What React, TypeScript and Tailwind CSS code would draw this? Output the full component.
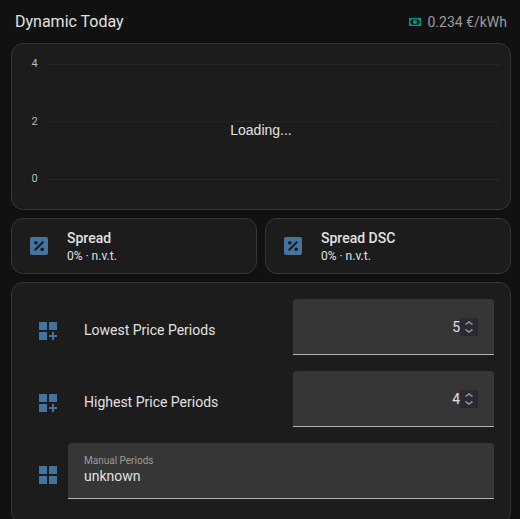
import { useId, useState } from "react";

const ICONS = {
  cash: "M3,6H21V18H3V6M12,9A3,3 0 0,1 15,12A3,3 0 0,1 12,15A3,3 0 0,1 9,12A3,3 0 0,1 12,9M7,8A2,2 0 0,1 5,10V14A2,2 0 0,1 7,16H17A2,2 0 0,1 19,14V10A2,2 0 0,1 17,8H7Z",
  percentBox:
    "M19 3H5C3.89 3 3 3.89 3 5V19C3 20.11 3.9 21 5 21H19C20.11 21 21 20.11 21 19V5C21 3.89 20.1 3 19 3M8.83 7.05C9.81 7.05 10.6 7.84 10.6 8.82C10.6 9.8 9.81 10.59 8.83 10.59C7.84 10.59 7.05 9.8 7.05 8.82C7.05 7.84 7.84 7.05 8.83 7.05M15.22 17C14.24 17 13.45 16.2 13.45 15.22C13.45 14.24 14.24 13.45 15.22 13.45C16.2 13.45 17 14.24 17 15.22C17 16.2 16.2 17 15.22 17M8.5 17.03L7 15.53L15.53 7L17.03 8.5L8.5 17.03Z",
  gridPlus:
    "M3 21H11V13H3M3 11H11V3H3M13 21M13 3V11H21V3M18 16V13H16V16H13V18H16V21H18V18H21V16H18Z",
  grid: "M3 11H11V3H3M3 21H11V13H3M13 21H21V13H13M13 3V11H21V3",
};

function Icon({ path, className }: { path: string; className: string }) {
  return (
    <svg viewBox="0 0 24 24" fill="currentColor" className={`shrink-0 ${className}`} aria-hidden="true">
      <path d={path} />
    </svg>
  );
}

const CARD = "rounded-xl border border-[#363636] bg-[#1c1c1c]";
const FIELD = "h-14 rounded-t border-b border-[#b4b4b4] bg-[#363636]";

function ChartCard() {
  return (
    <section className={`relative flex h-[167px] flex-col justify-between pt-3 pr-2.5 pb-[22px] pl-[17px] ${CARD}`}>
      {["4", "2", "0"].map((tick) => (
        <div key={tick} className="flex h-4 items-center gap-2">
          <span className="w-[11px] text-center text-[11px] leading-4 text-[#b8b8b8]">{tick}</span>
          <span className="h-px flex-1 bg-[#262626]" />
        </div>
      ))}
      <p className="absolute inset-x-0 top-[76px] text-center font-['Liberation_Sans',Arial,sans-serif] text-sm text-[#e1e1e1]">
        Loading...
      </p>
    </section>
  );
}

function SpreadCard({ title, value }: { title: string; value: string }) {
  return (
    <section className={`flex h-14 items-center gap-4 pl-[15px] ${CARD}`}>
      <Icon path={ICONS.percentBox} className="size-6 text-[#44739e]" />
      <div>
        <h2 className="text-sm leading-5 font-medium">{title}</h2>
        <p className="text-xs leading-4">{value}</p>
      </div>
    </section>
  );
}

function NumberRow({ label, initial }: { label: string; initial: number }) {
  const id = useId();
  const [value, setValue] = useState(initial);
  return (
    <div className="flex items-center">
      <div className="flex flex-1 items-center gap-6 pt-2">
        <Icon path={ICONS.gridPlus} className="size-6 text-[#44739e]" />
        <label htmlFor={id} className="flex-1 pb-0.5 text-sm">
          {label}
        </label>
      </div>
      <div className={`flex w-[201px] items-center px-4 ${FIELD}`}>
        <input
          id={id}
          type="number"
          value={value}
          onChange={(e) => setValue(Number(e.target.value))}
          className="min-w-0 flex-1 appearance-none bg-transparent text-right text-sm outline-none [-moz-appearance:textfield] [&::-webkit-inner-spin-button]:appearance-none"
        />
        <div className="flex size-[18px] flex-col items-center justify-center gap-1 bg-[#2b2a33] text-[#8f8f9d]">
          <button type="button" aria-label={`Increase ${label}`} onClick={() => setValue(value + 1)}>
            <svg viewBox="0 0 8 4" className="block h-1 w-2" fill="none" stroke="currentColor" strokeWidth="1.5">
              <path d="M0.5 3.6 4 0.8 7.5 3.6" />
            </svg>
          </button>
          <button type="button" aria-label={`Decrease ${label}`} onClick={() => setValue(value - 1)}>
            <svg viewBox="0 0 8 4" className="block h-1 w-2" fill="none" stroke="currentColor" strokeWidth="1.5">
              <path d="M0.5 0.4 4 3.2 7.5 0.4" />
            </svg>
          </button>
        </div>
      </div>
    </div>
  );
}

export default function App() {
  return (
    <main className="flex h-screen flex-col overflow-hidden bg-[#111111] pr-[9px] pl-[11px] font-[Roboto,sans-serif] text-[#e1e1e1]">
      <div className="flex shrink-0 flex-col gap-2">
        <header className="flex h-[35px] items-center justify-between px-1 pt-2">
          <h1 className="text-base">Dynamic Today</h1>
          <p className="flex items-center gap-1 text-sm text-[#9b9b9b]">
            <Icon path={ICONS.cash} className="size-4 text-[#009b82]" />
            0.234 €/kWh
          </p>
        </header>
        <ChartCard />
        <div className="grid grid-cols-2 gap-2">
          <SpreadCard title="Spread" value="0% · n.v.t." />
          <SpreadCard title="Spread DSC" value="0% · n.v.t." />
        </div>
        <section className={`flex flex-col gap-4 pt-4 pr-4 pb-6 pl-6 ${CARD}`}>
          <NumberRow label="Lowest Price Periods" initial={5} />
          <NumberRow label="Highest Price Periods" initial={4} />
          <div className="flex items-center gap-2">
            <div className="pt-2">
              <Icon path={ICONS.grid} className="size-6 text-[#44739e]" />
            </div>
            <div className={`flex flex-1 flex-col px-4 pt-2.5 ${FIELD}`}>
              <label htmlFor="manual-periods" className="text-[10px] leading-4 text-[#9b9b9b]">
                Manual Periods
              </label>
              <input
                id="manual-periods"
                type="text"
                defaultValue="unknown"
                className="h-3.5 bg-transparent text-sm leading-3.5 outline-none"
              />
            </div>
          </div>
        </section>
      </div>
    </main>
  );
}
